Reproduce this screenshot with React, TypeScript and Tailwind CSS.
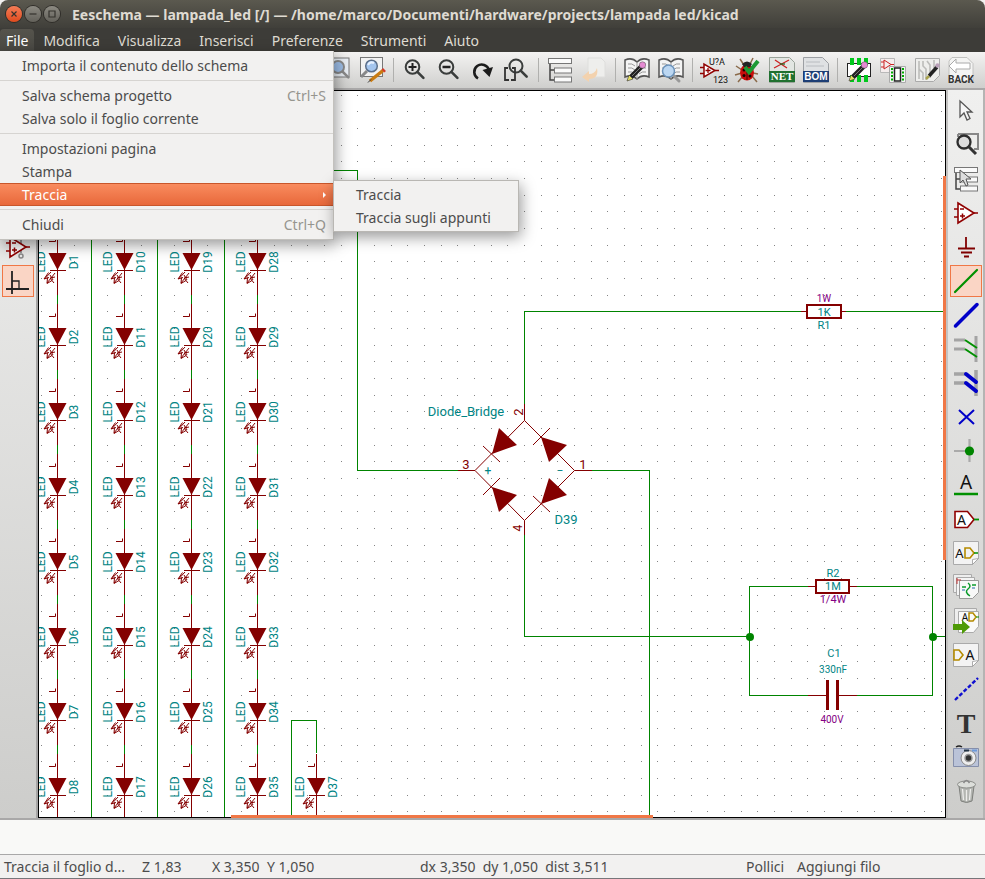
import React from "react";

type Kids = { children?: React.ReactNode };

const UI = "font-['Noto_Sans','Open_Sans',sans-serif]";

function Icon({ children }: Kids) {
  return (
    <svg viewBox="0 0 26 26" className="h-[26px] w-[26px] shrink-0 overflow-visible" fill="none" aria-hidden="true">
      {children}
    </svg>
  );
}

/* ---------- shared glyph parts ---------- */

function Lens({ cx, cy, r, color = "#3a3d3c", fill = "none" }: { cx: number; cy: number; r: number; color?: string; fill?: string }) {
  const d = r * 0.72;
  return (
    <>
      <path d={`M${cx + d} ${cy + d}L${cx + d + 6} ${cy + d + 6}`} stroke={color} strokeWidth="2.600" strokeLinecap="round" />
      <circle cx={cx} cy={cy} r={r} stroke={color} strokeWidth="2" fill={fill} />
    </>
  );
}

function OpAmp() {
  return (
    <>
      <path d="M5 3v20L21 13z" fill="#fff" stroke="#900000" strokeWidth="1.6" />
      <path d="M1 9h4M1 17h4M21 13h4M7 9h4M7 16h5M9.500 13.500v5" stroke="#900000" strokeWidth="1.500" />
    </>
  );
}

function Page() {
  return (
    <>
      <path d="M.500 1.500h25v17l-6 6H.500z" fill="#f3f3f3" stroke="#aaa" />
      <path d="M25.500 18.500l-6 6v-5z" fill="#fff" stroke="#999" strokeWidth=".8" />
    </>
  );
}

function Book() {
  return (
    <>
      <path d="M1 3q7-3 12 2 5-5 12-2v17q-7-3-12 2-5-5-12-2z" fill="#f4f4f4" stroke="#555" strokeWidth="1.500" />
      <path d="M13 5v17M4 7q4-1 7 2M4 11q4-1 7 2M4 15q4-1 7 2M22 7q-4-1-7 2M22 11q-4-1-7 2M22 15q-4-1-7 2" stroke="#999" />
    </>
  );
}

function Pencil() {
  return (
    <>
      <path d="M7 20L19 8" stroke="#222" strokeWidth="5" />
      <path d="M8 19L18 9" stroke="#777" strokeWidth="1" />
      <path d="M3 24l2-6 4 4z" fill="#e6e060" stroke="#333" strokeWidth=".6" />
      <circle cx="18.500" cy="8" r="3.200" fill="#e58ad2" stroke="#555" strokeWidth=".5" />
    </>
  );
}

function Tree() {
  return (
    <>
      <path d="M3 7v16h5M3 13h4" stroke="#444" strokeWidth="1.500" />
      <rect x="1.500" y="1.500" width="23" height="5" fill="#fafafa" stroke="#777" />
      <rect x="7.500" y="11" width="17" height="5" fill="#fafafa" stroke="#777" />
      <rect x="7.500" y="20" width="17" height="5" fill="#fafafa" stroke="#777" />
    </>
  );
}

/* ---------- top tool bar glyphs ---------- */

const Find = () => (
  <Icon>
    <rect x="1" y="1" width="23" height="19" fill="#e9eef4" stroke="#777" />
    <Lens cx={13} cy={10} r={6} color="#8a8a8a" fill="#9fc0ea" />
  </Icon>
);
const Replace = () => (
  <Icon>
    <rect x="1.500" y=".500" width="22" height="19" fill="#f2f2f2" stroke="#777" />
    <path d="M8 14l-6 6" stroke="#888" strokeWidth="3" />
    <circle cx="12.500" cy="9" r="5.800" fill="#a4c5ee" stroke="#5c6f8a" strokeWidth="1.500" />
    <path d="M9 8q2-4 6-2" stroke="#e7f1ff" strokeWidth="2" />
    <path d="M11 24L24 13.500" stroke="#c97b12" strokeWidth="3.500" />
    <path d="M24 14l1.500-1.500" stroke="#d43a2a" strokeWidth="4" />
    <path d="M9 25.500l3-3" stroke="#333" />
  </Icon>
);
const ZoomIn = () => (
  <Icon>
    <Lens cx={10.5} cy={10} r={6.8} />
    <path d="M6.500 10h8M10.500 6v8" stroke="#222" strokeWidth="2" />
  </Icon>
);
const ZoomOut = () => (
  <Icon>
    <Lens cx={10.5} cy={10} r={6.8} />
    <path d="M6.500 10h8" stroke="#222" strokeWidth="2.500" />
  </Icon>
);
const Redraw = () => (
  <Icon>
    <path d="M8 21.500A7.500 7.500 0 1 1 19 13" stroke="#1c1c1c" strokeWidth="2.600" />
    <path d="M12.500 13l10.500-3-3.500 10z" fill="#1c1c1c" />
  </Icon>
);
const ZoomFit = () => (
  <Icon>
    <Lens cx={12} cy={9} r={6.500} />
    <path d="M4 11H1v12h4M8 11h3v12H7" stroke="#333" strokeWidth="1.800" />
  </Icon>
);
const Leave = () => (
  <Icon>
    <path d="M7 1h13l4 4v15H7z" fill="#eeeeec" stroke="#dededc" />
    <path d="M1 20l7-6v3q6 0 8-6 2 11-8 11v3z" fill="#f3d2ae" />
  </Icon>
);
const LibEdit = () => (
  <Icon>
    <Book />
    <Pencil />
  </Icon>
);
const LibBrowse = () => (
  <Icon>
    <Book />
    <path d="M15 18l6 6" stroke="#999" strokeWidth="3" strokeLinecap="round" />
    <circle cx="10.500" cy="14" r="6" fill="#bcd7f2" stroke="#6c93bb" strokeWidth="1.500" />
  </Icon>
);
const Annotate = () => (
  <Icon>
    <path d="M3 7v13l11-6.500z" fill="#fff" stroke="#900000" strokeWidth="1.500" />
    <path d="M-1 10.500h4M-1 16.500h4M14 13.500h4M4.500 13.500h5M7 11v5" stroke="#900000" strokeWidth="1.300" />
    <g fill="#111" fontFamily="Roboto, sans-serif" fontSize="9">
      <text x="8" y="8">U?A</text>
      <text x="12" y="26">123</text>
    </g>
  </Icon>
);
const Erc = () => (
  <Icon>
    <path d="M5 2l4 6M18 1l-3 6M1 9l6 4M0 18l7-2M3 25l5-6M22 25l-5-6M23 17l-5-1" stroke="#8a6a4a" strokeWidth="1.500" />
    <ellipse cx="12" cy="15.500" rx="7" ry="8" fill="#c90c0c" />
    <path d="M7 7q5-5 10 0l-2 3H9z" fill="#242424" />
    <path d="M12 9v14" stroke="#400" />
    <g fill="#1c0000">
      <circle cx="9" cy="13" r="1.500" />
      <circle cx="15" cy="14" r="1.500" />
      <circle cx="9" cy="18.500" r="1.500" />
      <circle cx="15" cy="19" r="1.500" />
    </g>
    <path d="M10 10l4 5 9-11" stroke="#1d9a35" strokeWidth="4" />
  </Icon>
);
const Netlist = () => (
  <Icon>
    <path d="M.500.500h20l5 5v20H.500z" fill="#e2e6e2" stroke="#9aa39a" />
    <path d="M5 11L20 3M6 3l12 8" stroke="#c22" strokeWidth="1.300" />
    <path d="M11 7h5" stroke="#262" strokeWidth="1.300" />
    <rect y="14" width="26" height="11" fill="#20702f" />
    <text x="13" y="23" textAnchor="middle" fontFamily="Liberation Serif, serif" fontWeight="700" fontSize="11" fill="#fff">NET</text>
  </Icon>
);
const Bom = () => (
  <Icon>
    <path d="M.500.500h19l6 6v19H.500z" fill="#dfe1e3" stroke="#9c9fa3" />
    <path d="M3 5h14M3 9h18" stroke="#b9bcc0" />
    <rect y="14" width="26" height="11" fill="#1d3e75" />
    <text x="13" y="23" textAnchor="middle" fontFamily="Liberation Sans, sans-serif" fontWeight="700" fontSize="10" fill="#fff">BOM</text>
  </Icon>
);
const Footprint = () => (
  <Icon>
    <rect x="1.500" y="6.500" width="23" height="13" fill="#fff" stroke="#222" />
    <path d="M6 1v7M13 1v7M6 18v7M20 1v7M13 18v7M20 18v7" stroke="#00c81c" strokeWidth="4" />
    <Pencil />
  </Icon>
);
const CvPcb = () => (
  <Icon>
    <path d="M.500 1.500h14v14H.500z" fill="#f5eeee" stroke="#b9b9b9" />
    <path d="M4 3v9l7-4.500zM1 5h3M1 10h3M11 7.500h3" stroke="#c22" />
    <path d="M9.500 9.500h16v16h-16z" fill="#f4f4f4" stroke="#aaa" />
    <path d="M14.500 11h6v13h-6z" fill="#fff" stroke="#222" strokeWidth="1.500" />
    <path d="M12 11v13M23 11v13" stroke="#0a0" strokeWidth="2" strokeDasharray="2 1.500" />
  </Icon>
);
const Pcb = () => (
  <Icon>
    <path d="M1.500 1.500h24v17l-6 6h-18z" fill="#eeeeec" stroke="#aaa" />
    <path d="M5 4v18M9 4v5l3 3v11M13 4l3 4v13M20 3v8M5 12l4 4v7" stroke="#bcbcba" strokeWidth="1.600" />
    <path d="M15 19l8-9" stroke="#222" strokeWidth="3.500" />
    <path d="M12 22l3-3" stroke="#a9a34e" strokeWidth="2.500" />
    <circle cx="23.500" cy="8.500" r="2.200" fill="#b9a0b8" />
  </Icon>
);
const Back = () => (
  <Icon>
    <path d="M4 .500h15l6 6v18H1V4z" fill="#f4f4f3" stroke="#c2c2c0" />
    <path d="M1 9l7-7v4h14v6H8v4z" fill="#fff" stroke="#aaa" />
    <text x="13" y="26" textAnchor="middle" fontFamily="Roboto, sans-serif" fontWeight="700" fontSize="10" fill="#333">BACK</text>
  </Icon>
);
const Sheet = () => (
  <Icon>
    <Page />
  </Icon>
);
const Hierarchy = () => (
  <Icon>
    <Tree />
  </Icon>
);

/* ---------- side tool bar glyphs ---------- */

const AmpIcon = () => (
  <Icon>
    <OpAmp />
  </Icon>
);
const HiddenPins = () => (
  <Icon>
    <path d="M16 3v16" stroke="#999" strokeWidth="2" />
    <OpAmp />
    <circle cx="16" cy="22" r="2" stroke="#888" strokeWidth="1.500" />
  </Icon>
);
const Ortho = () => (
  <Icon>
    <path d="M7 3v23M1 21h23" stroke="#222" strokeWidth="1.800" />
    <path d="M7 13h7v8" stroke="#222" strokeWidth="1.300" />
  </Icon>
);
const Arrow = () => (
  <Icon>
    <path d="M7 3v16l4-4 3 7 3-1.500-3-6.500h5z" fill="#f6f6f6" stroke="#555" strokeWidth="1.300" />
  </Icon>
);
const ZoomSel = () => (
  <Icon>
    <path d="M5 2h20v15h-4M5 2v3" stroke="#888" strokeWidth="2" />
    <path d="M16 15l7 7" stroke="#333" strokeWidth="3" />
    <circle cx="11" cy="10" r="6.500" stroke="#2d2d2d" strokeWidth="2.300" fill="#dcdcdc" />
  </Icon>
);
const HierNav = () => (
  <Icon>
    <Tree />
    <path d="M7 4v13l3-3 3 6 2-1-2-6h5z" fill="#ddd" stroke="#555" />
  </Icon>
);
const Ground = () => (
  <Icon>
    <path d="M13 3v11M5 14.500h17M8 18.500h11M11 22.500h5" stroke="#800000" strokeWidth="1.800" />
  </Icon>
);
const Wire = () => (
  <Icon>
    <path d="M2 24L24 2" stroke="#009000" strokeWidth="2.200" strokeLinecap="round" />
  </Icon>
);
const Bus = () => (
  <Icon>
    <path d="M2.500 24L24 2.500" stroke="#0000c8" strokeWidth="3.500" strokeLinecap="round" />
  </Icon>
);
const WireEntry = () => (
  <Icon>
    <path d="M23 0v26M1 4h11M1 13h11" stroke="#a4a4a4" strokeWidth="3" />
    <path d="M12 4l12 8M12 13l12 8" stroke="#009000" strokeWidth="2" />
  </Icon>
);
const BusEntry = () => (
  <Icon>
    <path d="M23 0v26M1 4h11M1 13h11" stroke="#a4a4a4" strokeWidth="3.500" />
    <path d="M13 4l10 8M13 13l10 8" stroke="#0000c8" strokeWidth="4" strokeLinecap="round" />
  </Icon>
);
const NoConnect = () => (
  <Icon>
    <path d="M6 6l15 14M21 6L6 20" stroke="#0000c8" strokeWidth="2" />
  </Icon>
);
const Junction = () => (
  <Icon>
    <path d="M16.500 1v23M1 13h15" stroke="#aaa" strokeWidth="2.200" />
    <circle cx="16.500" cy="13" r="4.600" fill="#008500" />
  </Icon>
);
const NetName = () => (
  <Icon>
    <text x="13" y="17" textAnchor="middle" fontFamily="Noto Sans, sans-serif" fontSize="19" fill="#111">A</text>
    <path d="M1 22h24" stroke="#009000" strokeWidth="2.500" />
  </Icon>
);
const GlobalLabel = () => (
  <Icon>
    <path d="M2 5.500h12.500l6.500 8-6.500 8H2z" fill="#fff" stroke="#900000" strokeWidth="1.600" />
    <path d="M21 13.500h5" stroke="#009000" strokeWidth="1.800" />
    <text x="8.500" y="18.500" textAnchor="middle" fontFamily="Noto Sans, sans-serif" fontSize="14" fill="#111">A</text>
  </Icon>
);
const HierLabel = () => (
  <Icon>
    <Page />
    <text x="6.500" y="18" textAnchor="middle" fontFamily="Noto Sans, sans-serif" fontSize="13" fill="#111">A</text>
    <path d="M12 8h5l4 5-4 5h-5z" stroke="#b58b00" strokeWidth="1.600" />
    <path d="M21 13h4" stroke="#009000" strokeWidth="1.500" />
  </Icon>
);
const NewSheet = () => (
  <Icon>
    <path d="M.500.500h18v18H.500z" fill="#eee" stroke="#aaa" />
    <path d="M3.500 3.500h18v18h-18z" fill="#f4f4f4" stroke="#aaa" />
    <path d="M6.500 6.500h19v12l-6 6h-13z" fill="#f8f8f8" stroke="#999" />
    <path d="M4 4v6M4 6h4" stroke="#b33" />
    <path d="M9 13h4M19 11h4M15 9q4 3 0 6t2 7" stroke="#0b9a2c" strokeWidth="1.500" />
    <path d="M9 16h3M19 14h3" stroke="#26a" />
  </Icon>
);
const ImportPin = () => (
  <Icon>
    <path d="M1.500.500h22v18h-22z" fill="#eee" stroke="#aaa" />
    <path d="M5.500 3.500h20v15l-5 6h-15z" fill="#fafafa" stroke="#aaa" />
    <text x="12" y="13" textAnchor="middle" fontFamily="Noto Sans, sans-serif" fontSize="10" fill="#111">A</text>
    <path d="M16 5h4l3 4-3 4h-4z" stroke="#b58b00" strokeWidth="1.500" />
    <path d="M23 9h3" stroke="#009000" />
    <path d="M0 16h9v-4l8 7-8 7v-4H0z" fill="#4e9a06" />
  </Icon>
);
const SheetPin = () => (
  <Icon>
    <Page />
    <path d="M1 8h5l4 5-4 5H1z" stroke="#b58b00" strokeWidth="1.600" />
    <text x="17" y="18" textAnchor="middle" fontFamily="Noto Sans, sans-serif" fontSize="14" fill="#111">A</text>
  </Icon>
);
const Dashed = () => (
  <Icon>
    <path d="M2 24L25 2" stroke="#1010d0" strokeWidth="2.400" strokeDasharray="4 2" />
  </Icon>
);
const TextTool = () => (
  <Icon>
    <text x="13" y="23" textAnchor="middle" fontFamily="Liberation Serif, serif" fontWeight="700" fontSize="28" fill="#333">T</text>
  </Icon>
);
const Camera = () => (
  <Icon>
    <path d="M.500 4.500h25v18H.500z" fill="#bac3d8" stroke="#858fab" />
    <path d="M3 3q3-2 6 0" stroke="#222" strokeWidth="1.500" />
    <circle cx="15.500" cy="14" r="7.500" fill="#eee" stroke="#888" />
    <circle cx="15.500" cy="14" r="3.500" fill="#333" stroke="#999" strokeWidth="1.500" />
    <path d="M11 6.500h5" stroke="#234" strokeWidth="2" />
    <path d="M19 6.500h5" stroke="#6d9adb" strokeWidth="2" />
  </Icon>
);
const Trash = () => (
  <Icon>
    <path d="M6 8h15l-2 15q-5.500 3-11 0z" fill="#b4b6b2" stroke="#7d7f7b" />
    <ellipse cx="13.500" cy="6.500" rx="9" ry="3.500" fill="#dcdeda" stroke="#8c8e8a" />
    <path d="M10.500 5q3-5 6 0" stroke="#888" strokeWidth="1.500" />
    <path d="M9.500 11l1 11M13.500 12v11M17.500 11l-1 11" stroke="#ededeb" strokeWidth="1.300" />
  </Icon>
);

/* ---------- chrome ---------- */

type Tool = { name: string; Glyph: () => React.ReactElement; on?: boolean };

function ToolButton({ name, Glyph, on }: Tool) {
  return (
    <button
      type="button"
      aria-label={name}
      aria-pressed={on}
      className="flex h-[34px] w-[34px] shrink-0 items-center justify-center"
    >
      <span
        className={
          on
            ? "flex h-8 w-8 items-center justify-center border border-[#f07746] bg-[#fad5c5]"
            : "flex h-8 w-8 items-center justify-center"
        }
      >
        <Glyph />
      </span>
    </button>
  );
}

const topGroups: Tool[][] = [
  [{ name: "Salva", Glyph: Sheet }],
  [
    { name: "Impostazioni pagina", Glyph: Sheet },
    { name: "Stampa", Glyph: Sheet },
  ],
  [
    { name: "Taglia", Glyph: Sheet },
    { name: "Copia", Glyph: Sheet },
    { name: "Incolla", Glyph: Sheet },
  ],
  [
    { name: "Annulla", Glyph: Sheet },
    { name: "Ripeti", Glyph: Sheet },
  ],
  [
    { name: "Trova", Glyph: Find },
    { name: "Sostituisci", Glyph: Replace },
  ],
  [
    { name: "Ingrandisci", Glyph: ZoomIn },
    { name: "Rimpicciolisci", Glyph: ZoomOut },
    { name: "Ridisegna", Glyph: Redraw },
    { name: "Adatta", Glyph: ZoomFit },
  ],
  [
    { name: "Gerarchia", Glyph: Hierarchy },
    { name: "Lascia foglio", Glyph: Leave },
  ],
  [
    { name: "Editor librerie", Glyph: LibEdit },
    { name: "Sfoglia librerie", Glyph: LibBrowse },
  ],
  [
    { name: "Annota schema", Glyph: Annotate },
    { name: "Controllo regole elettriche", Glyph: Erc },
    { name: "Genera netlist", Glyph: Netlist },
    { name: "Distinta materiali", Glyph: Bom },
  ],
  [
    { name: "Editor impronte", Glyph: Footprint },
    { name: "Associa impronte", Glyph: CvPcb },
    { name: "Pcbnew", Glyph: Pcb },
    { name: "Importa impronte", Glyph: Back },
  ],
];

const leftTools: Tool[] = [
  { name: "Griglia", Glyph: Sheet },
  { name: "Pollici", Glyph: Sheet },
  { name: "Millimetri", Glyph: Sheet },
  { name: "Cursore", Glyph: Arrow },
  { name: "Pin nascosti", Glyph: HiddenPins },
  { name: "Fili ortogonali", Glyph: Ortho, on: true },
];

const rightTools: Tool[] = [
  { name: "Seleziona", Glyph: Arrow },
  { name: "Zoom selezione", Glyph: ZoomSel },
  { name: "Naviga gerarchia", Glyph: HierNav },
  { name: "Componente", Glyph: AmpIcon },
  { name: "Alimentazione", Glyph: Ground },
  { name: "Filo", Glyph: Wire, on: true },
  { name: "Bus", Glyph: Bus },
  { name: "Ingresso filo", Glyph: WireEntry },
  { name: "Ingresso bus", Glyph: BusEntry },
  { name: "Non connesso", Glyph: NoConnect },
  { name: "Giunzione", Glyph: Junction },
  { name: "Etichetta", Glyph: NetName },
  { name: "Etichetta globale", Glyph: GlobalLabel },
  { name: "Etichetta gerarchica", Glyph: HierLabel },
  { name: "Foglio gerarchico", Glyph: NewSheet },
  { name: "Importa pin", Glyph: ImportPin },
  { name: "Pin foglio", Glyph: SheetPin },
  { name: "Linea", Glyph: Dashed },
  { name: "Testo", Glyph: TextTool },
  { name: "Immagine", Glyph: Camera },
  { name: "Elimina", Glyph: Trash },
];

function MenuRow({ label, keys, on, arrow }: { label: string; keys?: string; on?: boolean; arrow?: boolean }) {
  return (
    <button
      type="button"
      role="menuitem"
      className={
        on
          ? "flex h-[23px] w-full items-center justify-between border-y border-[#c8562b] bg-linear-to-b from-[#f98b5e] to-[#e8683a] pl-[22px] pr-[7px] text-white"
          : "flex h-[23px] w-full items-center justify-between pl-[22px] pr-[7px] text-[#4c4c4c]"
      }
    >
      <span>{label}</span>
      {keys && <span className="text-[#96958f]">{keys}</span>}
      {arrow && <span className="h-0 w-0 border-y-3 border-l-3 border-y-transparent border-l-white" />}
    </button>
  );
}

function MenuLine() {
  return <div role="separator" className="my-[3px] h-px bg-[#d6d4d1]" />;
}

/* ---------- schematic ---------- */

const RED = "#840000";
const GREEN = "#008400";
const TEAL = "#008484";
const PURPLE = "#840084";

function Label({ x, y, size = 12, color = TEAL, turn, children }: Kids & { x: number; y: number; size?: number; color?: string; turn?: boolean }) {
  return (
    <text
      x={x}
      y={y}
      fill={color}
      fontSize={size}
      textAnchor="middle"
      transform={turn ? `rotate(-90 ${x} ${y})` : undefined}
    >
      {children}
    </text>
  );
}

function Led({ x, y, name }: { x: number; y: number; name: string }) {
  return (
    <g>
      <g transform={`translate(${x} ${y})`} fill="none" stroke={RED}>
        <path d="M.500-24V42M-7 17.500H9" />
        <path d="M-8.500 0H9.500L.500 17z" fill={RED} stroke="none" />
        <path d="M-8-11.500H-1.500V-14.500" />
        <path d="M-6 19l-6.500 7M-8.500 19.500l-4.500 6.500 5-1.500M-2 20l-8 10M-9.500 24.500l-.500 6 5-3M-2 24l-5 1 4 5M-7 22l3 5" />
      </g>
      <Label x={x - 12} y={y + 9} turn>LED</Label>
      <Label x={x + 21} y={y + 9} turn>{name}</Label>
    </g>
  );
}

const columns = [57, 124, 191, 257];
const gridX = Array.from({ length: 56 }, (_, i) => Math.round(24.1 + (i * 50) / 3));
const gridY = Array.from({ length: 44 }, (_, i) => Math.floor(95.1 + (i * 50) / 3));

function Schematic() {
  return (
    <svg className="absolute inset-0 h-full w-full overflow-hidden" fontFamily="Roboto, sans-serif" role="img" aria-label="Schema elettrico">
      <g transform="translate(-39 -91)">
        <g fill="#848484" shapeRendering="crispEdges">
          {gridY.map((y) => gridX.map((x) => <rect key={`${x}-${y}`} x={x} y={y} width="1" height="1" />))}
        </g>
        <g fill="none" stroke={GREEN} shapeRendering="crispEdges">
          {columns.map((x) => (
            <path key={x} d={`M${x + 0.5} 220V830`} />
          ))}
          <path d="M91.500 100V830M157.500 100V830M224.500 100V830M291.500 830V720.500H316.500V753" />
          <path d="M300 170.500H357.500V470.500H458" />
          <path d="M524.500 404V311.500H801M845 311.500H960" />
          <path d="M592 470.500H649.500V830M524.500 535V636.500H749" />
          <path d="M808 586.500H749.500V695.500H808M857 586.500H932.500V695.500H857M932 636.500H960" />
        </g>
        <g fill={GREEN}>
          <circle cx="750" cy="637" r="4" />
          <circle cx="933" cy="637" r="4" />
        </g>
        {columns.map((x, c) =>
          Array.from({ length: 8 }, (_, r) => <Led key={`${c}-${r}`} x={x} y={253 + r * 75} name={`D${c * 9 + r + 1}`} />),
        )}
        <Led x={316} y={778} name="D37" />

        <g fill="none" stroke={RED}>
          <path d="M524.500 404V420.500L475 470.500H458M475 470.500L524.500 520.500V535M524.500 520.500L574.500 470.500H592M574.500 470.500L524.500 420.500" />
          <path d="M483 446l17 16M483 495l17-17M533 445l17-17M533 496l17 16" />
          <path d="M499 428l18 17-25 9zM517 495l-18 17-7-25zM541 437l26 8-18 17zM549 478l18 17-26 9z" fill={RED} stroke="none" />
          <path d="M801 311.500h5M842 311.500h4M808 586.500h7M850 586.500h7M808 695.500h18M839 695.500h18" />
          <path d="M807 305h34v13h-34zM816 580h33v13h-33z" strokeWidth="2" />
          <path d="M827.500 680v30M837.500 680v30" strokeWidth="3" />
        </g>

        <Label x={466} y={416} size={13}>Diode_Bridge</Label>
        <Label x={566} y={524} size={13}>D39</Label>
        <Label x={488} y={475}>+</Label>
        <Label x={560} y={475}>−</Label>
        <Label x={466} y={469} size={13} color={RED}>3</Label>
        <Label x={583} y={469} size={13} color={RED}>1</Label>
        <Label x={523} y={412} size={13} color={RED} turn>2</Label>
        <Label x={522} y={528} size={12} color={RED} turn>4</Label>

        <Label x={824} y={302} size={10} color={PURPLE}>1W</Label>
        <Label x={824} y={316} size={11}>1K</Label>
        <Label x={824} y={329} size={11}>R1</Label>
        <Label x={833} y={577} size={11}>R2</Label>
        <Label x={833} y={590} size={11}>1M</Label>
        <Label x={833} y={603} size={11} color={PURPLE}>1/4W</Label>
        <Label x={834} y={657} size={11}>C1</Label>
        <Label x={833} y={673} size={10}>330nF</Label>
        <Label x={832} y={723} size={10} color={PURPLE}>400V</Label>
      </g>
    </svg>
  );
}

/* ---------- window ---------- */

const menus = ["File", "Modifica", "Visualizza", "Inserisci", "Preferenze", "Strumenti", "Aiuto"];

function WinButton({ name, close, children }: Kids & { name: string; close?: boolean }) {
  return (
    <button
      type="button"
      aria-label={name}
      className={
        close
          ? "h-4 w-4 rounded-full bg-linear-to-b from-[#f47c55] to-[#df4a1b] ring-1 ring-[#2f2d29]"
          : "h-4 w-4 rounded-full bg-linear-to-b from-[#8c8a82] to-[#63615a] ring-1 ring-[#2f2d29]"
      }
    >
      <svg viewBox="0 0 16 16" className="h-4 w-4" fill="none" stroke="#34322d" strokeWidth="1.200" aria-hidden="true">
        {children}
      </svg>
    </button>
  );
}

export default function App() {
  return (
    <div className={`${UI} relative flex h-screen min-h-[600px] flex-col overflow-hidden bg-[#f2f1f0] text-[14px] leading-5`}>
      <header className="flex h-7 shrink-0 items-center gap-[3px] rounded-t-lg bg-linear-to-b from-[#5b594f] to-[#403f3a] pl-1.5">
        <WinButton name="Chiudi finestra" close>
          <path d="M5.500 5.500l5 5M10.500 5.500l-5 5" />
        </WinButton>
        <WinButton name="Riduci">
          <path d="M4.500 8h7" />
        </WinButton>
        <WinButton name="Massimizza">
          <path d="M5 5h6v6H5z" />
        </WinButton>
        <h1 className="ml-[9px] whitespace-nowrap pt-0.5 font-bold text-[#dfdbd2]">
          Eeschema — lampada_led [/] — /home/marco/Documenti/hardware/projects/lampada led/kicad
        </h1>
      </header>

      <nav className="relative z-20 flex h-6 shrink-0 items-end bg-[#3d3c38] text-[#dfdbd2]">
        {menus.map((m) => (
          <button
            key={m}
            type="button"
            className={
              m === "File"
                ? "h-[23px] rounded-t bg-linear-to-b from-[#55534c] to-[#494843] px-[6px] text-white"
                : "h-[23px] px-[9px]"
            }
          >
            {m}
          </button>
        ))}
        <div role="menu" className="absolute left-0 top-full -mt-px w-[334px] border-r border-b border-[#c3c1bd] bg-[#f2f1f0] py-[3px] shadow-[2px_5px_14px_rgba(0,0,0,0.4)]">
          <MenuRow label="Importa il contenuto dello schema" />
          <MenuLine />
          <MenuRow label="Salva schema progetto" keys="Ctrl+S" />
          <MenuRow label="Salva solo il foglio corrente" />
          <MenuLine />
          <MenuRow label="Impostazioni pagina" />
          <MenuRow label="Stampa" />
          <div className="relative">
            <MenuRow label="Traccia" on arrow />
            <div role="menu" className="absolute left-full -top-[3px] w-[186px] border border-[#b9b7b3] bg-[#f2f1f0] py-[2px] shadow-[2px_5px_14px_rgba(0,0,0,0.4)]">
              <MenuRow label="Traccia" />
              <MenuRow label="Traccia sugli appunti" />
            </div>
          </div>
          <MenuLine />
          <MenuRow label="Chiudi" keys="Ctrl+Q" />
        </div>
      </nav>

      <div role="toolbar" aria-label="Principale" className="flex h-[38px] shrink-0 items-center overflow-hidden border-b-2 border-[#a9a8a8] bg-linear-to-b from-[#f4f3f2] to-[#cfcfcd] pl-[13px]">
        {topGroups.map((g, i) => (
          <React.Fragment key={i}>
            {i > 0 && (
              <div className="flex w-[9px] shrink-0 justify-center">
                <div className="h-6 w-px bg-[#b0b0ae]" />
              </div>
            )}
            {g.map((t) => (
              <ToolButton key={t.name} {...t} />
            ))}
          </React.Fragment>
        ))}
      </div>

      <div className="flex min-h-0 flex-1">
        <div role="toolbar" aria-label="Opzioni" className="flex w-[38px] shrink-0 flex-col border-r-2 border-[#a5a4a4] bg-linear-to-b from-[#f0f0ef] to-[#cdcdcb] pt-1 pl-px">
          {leftTools.map((t) => (
            <ToolButton key={t.name} {...t} />
          ))}
        </div>
        <main className="relative z-10 min-w-0 flex-1 border border-black bg-white">
          <Schematic />
          <div className="absolute -right-px top-[85px] h-[384px] w-[3px] bg-[#f07746]" />
          <div className="absolute -bottom-px left-[192px] h-[3px] w-[422px] bg-[#f07746]" />
        </main>
        <div role="toolbar" aria-label="Strumenti" className="flex w-[39px] shrink-0 flex-col overflow-hidden border-l-2 border-r-2 border-l-[#c4c3c2] border-r-[#b5b4b3] bg-linear-to-b from-[#f0f0ef] to-[#cdcdcb] pt-1 pl-px">
          {rightTools.map((t) => (
            <ToolButton key={t.name} {...t} />
          ))}
        </div>
      </div>

      <div className="h-[37px] shrink-0 border-t-2 border-b border-[#a9a8a8] bg-[#f9f9f7]" />
      <footer className="flex h-6 shrink-0 items-center whitespace-pre border-b border-[#77767a] bg-[#f2f1f0] pt-px pl-1 text-[#4c4c4c]">
        <span className="w-[138px]">Traccia il foglio d...</span>
        <span className="w-[70px]">Z 1,83</span>
        <span className="w-[208px]">X 3,350  Y 1,050</span>
        <span className="flex-1">dx 3,350  dy 1,050  dist 3,511</span>
        <span className="w-[51px]">Pollici</span>
        <span className="w-[188px]">Aggiungi filo</span>
      </footer>
    </div>
  );
}
